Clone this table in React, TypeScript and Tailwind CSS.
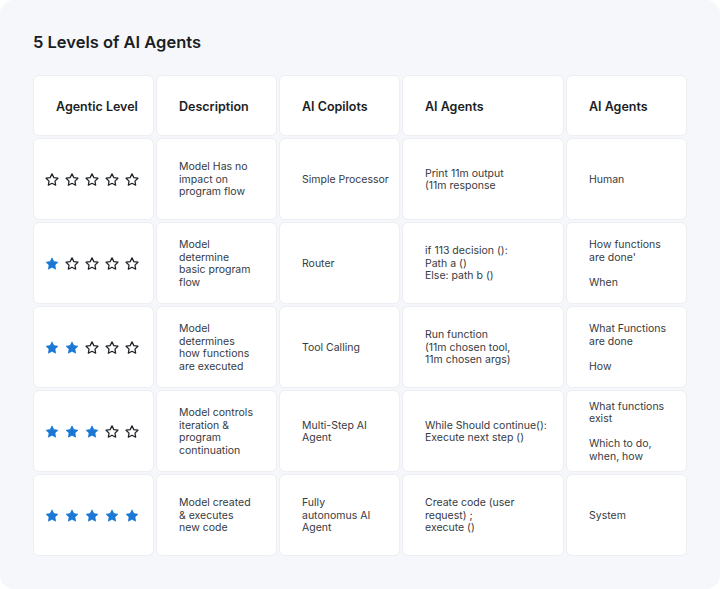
const HEADERS = ["Agentic Level", "Description", "AI Copilots", "AI Agents", "AI Agents"]

type Row = {
  stars: number
  description: string[]
  copilot: string[]
  agent: string[]
  control: string[]
}

const ROWS: Row[] = [
  {
    stars: 0,
    description: ["Model Has no", "impact on", "program flow"],
    copilot: ["Simple Processor"],
    agent: ["Print 11m output", "(11m response"],
    control: ["Human"],
  },
  {
    stars: 1,
    description: ["Model", "determine", "basic program", "flow"],
    copilot: ["Router"],
    agent: ["if 113 decision ():", "Path a ()", "Else: path b ()"],
    control: ["How functions", "are done'", "", "When"],
  },
  {
    stars: 2,
    description: ["Model", "determines", "how functions", "are executed"],
    copilot: ["Tool Calling"],
    agent: ["Run function", "(11m chosen tool,", "11m chosen args)"],
    control: ["What Functions", "are done", "", "How"],
  },
  {
    stars: 3,
    description: ["Model controls", "iteration &", "program", "continuation"],
    copilot: ["Multi-Step AI", "Agent"],
    agent: ["While Should continue():", "Execute next step ()"],
    control: ["What functions", "exist", "", "Which to do,", "when, how"],
  },
  {
    stars: 5,
    description: ["Model created", "& executes", "new code"],
    copilot: ["Fully", "autonomus AI", "Agent"],
    agent: ["Create code (user", "request) ;", "execute ()"],
    control: ["System"],
  },
]

const STAR_PATH =
  "M12 2.8l2.75 5.6 6.15.9-4.45 4.35 1.05 6.15L12 16.9l-5.5 2.9 1.05-6.15L3.1 9.3l6.15-.9z"

function Star({ filled }: { filled: boolean }) {
  return (
    <svg width="16" height="16" viewBox="0 0 24 24">
      <path
        d={STAR_PATH}
        fill={filled ? "#1a78d4" : "none"}
        stroke={filled ? "#1a78d4" : "#1f2328"}
        strokeWidth={filled ? 1 : 1.9}
        strokeLinejoin="round"
      />
    </svg>
  )
}

function Lines({ lines }: { lines: string[] }) {
  return (
    <div className="text-[10.5px] leading-[12.5px] text-[#363a42]">
      {lines.map((l, i) => (
        <div key={i} className="h-[12.5px] whitespace-nowrap">
          {l}
        </div>
      ))}
    </div>
  )
}

const cell = "bg-white rounded-[6px] border border-[#eceef3] flex items-center pl-[22px] pt-[2px]"

export default function App() {
  return (
    <div
      className="w-[720px] h-[589px] bg-[#f6f7fb] rounded-[14px] px-[33px] pt-[31px]"
      style={{ fontFamily: "Inter, 'Noto Sans', sans-serif" }}
    >
      <h1 className="text-[16.5px] font-semibold text-[#1b1e24] leading-[22px]">
        5 Levels of AI Agents
      </h1>

      <div className="mt-[22px] grid grid-cols-[121px_121px_121px_162px_121px] grid-rows-[61px_repeat(5,82px)] gap-[2px]">
        {HEADERS.map((h, i) => (
          <div key={i} className={cell + " pt-[3px]"}>
            <span className="text-[12.5px] font-semibold text-[#1b1e24]">{h}</span>
          </div>
        ))}

        {ROWS.map((row, r) => (
          <div key={r} className="contents">
            <div className="bg-white rounded-[6px] border border-[#eceef3] flex items-center pl-[10px] pt-[2px]">
              <div className="flex gap-[4px]">
                {[0, 1, 2, 3, 4].map((s) => (
                  <Star key={s} filled={s < row.stars} />
                ))}
              </div>
            </div>
            <div className={cell}>
              <Lines lines={row.description} />
            </div>
            <div className={cell}>
              <Lines lines={row.copilot} />
            </div>
            <div className={cell}>
              <Lines lines={row.agent} />
            </div>
            <div className={cell}>
              <Lines lines={row.control} />
            </div>
          </div>
        ))}
      </div>
    </div>
  )
}
